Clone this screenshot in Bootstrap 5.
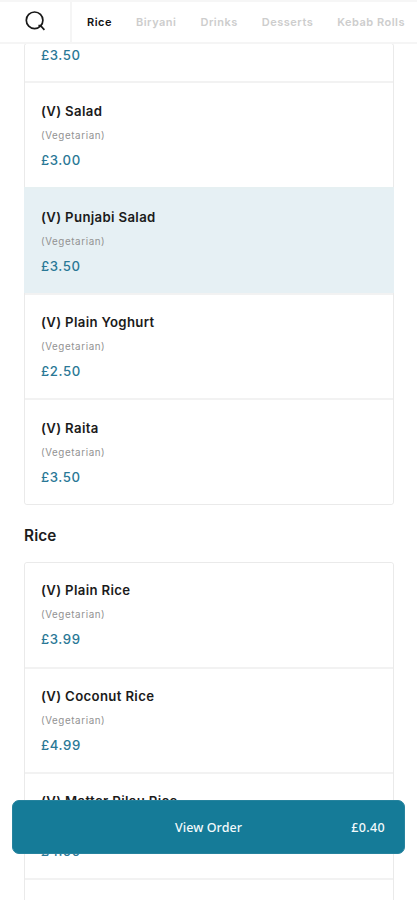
<!DOCTYPE html>
<html lang="en">
<head>
<meta charset="utf-8">
<meta name="viewport" content="width=device-width, initial-scale=1">
<title>Menu</title>
<link href="https://cdn.jsdelivr.net/npm/bootstrap@5.3.0/dist/css/bootstrap.min.css" rel="stylesheet">
<style>
body{font-family:Inter,"Liberation Sans",sans-serif;color:#1c1c1c;height:900px;background:#fff}
.topbar{height:44px;border-top:2px solid #f6f6f6;border-bottom:2px solid #f5f5f5}
.search-btn{width:72px;border-right:2px solid #f5f5f5!important;padding:0 0 2px}
.tabs{gap:24px;padding-left:15px;font-size:11px;line-height:40px;font-weight:600;letter-spacing:.5px}
.tabs a{color:#cdcdcd;white-space:nowrap;text-decoration:none}
.tabs a.active{color:#111}
.menu-page{height:900px;padding:43px 23px 0 24px}
.menu-list{--bs-list-group-border-radius:3px;border:1px solid #eaeaea}
.dish{height:105.5px;padding:16.5px 16px 0;border:0;border-top:2px solid #f2f2f2!important}
.dish:first-child{height:104px;border-top:0!important}
.dish.clipped:first-child{height:37px;padding-top:0}
.dish.clipped+.dish{height:106px}
.dish.chosen{background:#e6f0f4;border-color:#e6f0f2!important;margin:0 -1px;padding-left:17px}
.dish h3{font-size:13.2px;line-height:22px;font-weight:600;letter-spacing:.34px;margin:0 0 1px;color:#1b1b1b}
.dish .note{font-size:9.8px;line-height:26px;letter-spacing:.6px;color:#929292}
.dish .price{font-size:13.2px;line-height:23px;font-weight:500;letter-spacing:.6px;color:#2a7896}
.section-name{font-size:15.3px;line-height:20px;font-weight:600;letter-spacing:.15px;margin:21px 0 16px}
.order-bar{left:12px;right:12px;bottom:46px;height:54px;border-radius:7px;background:#157b98;color:#f2fafc;font:500 12.5px "Noto Sans","Open Sans",sans-serif;border:1px solid #26839e}
.order-bar .caption{letter-spacing:.08px}
.order-bar .total{margin-right:19px;letter-spacing:.35px}
.pilau{padding-top:15.5px}
.pilau .price{line-height:25px}
</style>
<script src="https://cdn.jsdelivr.net/npm/bootstrap@5.3.0/dist/js/bootstrap.bundle.min.js"></script>
</head>
<body class="overflow-hidden">
<header class="topbar fixed-top bg-white d-flex overflow-hidden">
  <button class="search-btn border-0 bg-white flex-shrink-0 d-flex align-items-center justify-content-center" aria-label="Search">
    <svg width="22" height="22" viewBox="0 0 22 22" fill="none" stroke="#181818" stroke-width="1.7"><circle cx="10.6" cy="10.3" r="8.3"/><path d="M14.4 15.7h2.2L20.4 19.8"/></svg>
  </button>
  <nav class="tabs d-flex">
    <a class="active" href="#rice">Rice</a><a href="#biryani">Biryani</a><a href="#drinks">Drinks</a><a href="#desserts">Desserts</a><a href="#rolls">Kebab Rolls</a>
  </nav>
</header>
<main class="menu-page overflow-hidden">
  <div class="list-group menu-list">
    <div class="list-group-item dish clipped"><div class="price">£3.50</div></div>
    <div class="list-group-item dish"><h3>(V) Salad</h3><div class="note">(Vegetarian)</div><div class="price">£3.00</div></div>
    <div class="list-group-item dish chosen"><h3>(V) Punjabi Salad</h3><div class="note">(Vegetarian)</div><div class="price">£3.50</div></div>
    <div class="list-group-item dish"><h3>(V) Plain Yoghurt</h3><div class="note">(Vegetarian)</div><div class="price">£2.50</div></div>
    <div class="list-group-item dish"><h3>(V) Raita</h3><div class="note">(Vegetarian)</div><div class="price">£3.50</div></div>
  </div>
  <h2 class="section-name" id="rice">Rice</h2>
  <div class="list-group menu-list">
    <div class="list-group-item dish"><h3>(V) Plain Rice</h3><div class="note">(Vegetarian)</div><div class="price">£3.99</div></div>
    <div class="list-group-item dish"><h3>(V) Coconut Rice</h3><div class="note">(Vegetarian)</div><div class="price">£4.99</div></div>
    <div class="list-group-item dish pilau"><h3>(V) Matter Pilau Rice</h3><div class="note">(Vegetarian)</div><div class="price">£4.99</div></div>
    <div class="list-group-item dish"></div>
  </div>
</main>
<button class="order-bar position-fixed d-flex align-items-center p-0">
  <span class="caption position-absolute start-0 end-0 text-center">View Order</span>
  <span class="total ms-auto">£0.40</span>
</button>
</body>
</html>
